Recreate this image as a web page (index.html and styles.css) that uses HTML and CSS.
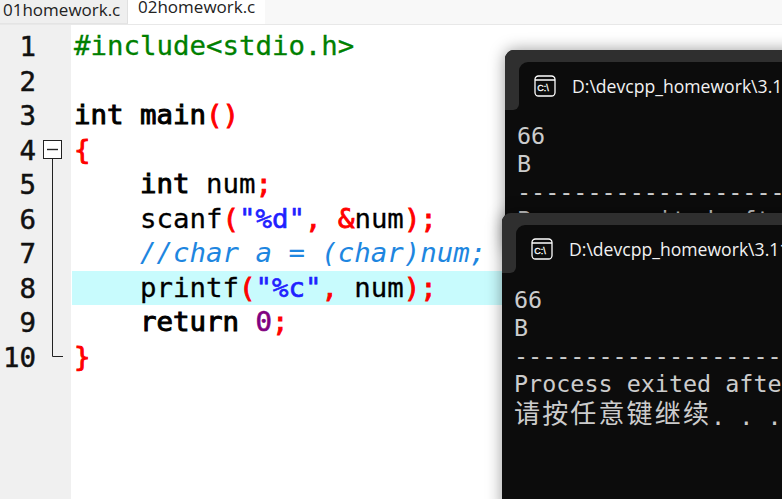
FILE: index.html
```html
<!DOCTYPE html>
<html lang="en">
<head>
<meta charset="utf-8">
<title>Dev-C++</title>
<link rel="stylesheet" href="styles.css">
</head>
<body>
<div class="app">
  <div class="tabs">
    <div class="tab inactive">01homework.c</div>
    <div class="tab active">02homework.c</div>
  </div>
  <div class="editor">
    <div class="gutter">
      <div class="num">1</div><div class="num">2</div><div class="num">3</div><div class="num">4</div><div class="num">5</div>
      <div class="num">6</div><div class="num">7</div><div class="num">8</div><div class="num">9</div><div class="num">10</div>
      <svg class="fold" width="24" height="225" viewBox="0 0 24 225">
        <rect x="0.5" y="0.5" width="18" height="18" fill="#fff" stroke="#222"/>
        <path d="M4 9.5H15" stroke="#222" stroke-width="1.4" fill="none"/>
        <path d="M9.5 19V216.5H20" stroke="#222" fill="none"/>
      </svg>
    </div>
    <div class="code">
      <div class="line"><span class="pre">#include&lt;stdio.h&gt;</span></div>
      <div class="line"></div>
      <div class="line"><span class="kw">int</span> <span class="kw">main</span><span class="sym">()</span></div>
      <div class="line"><span class="sym">{</span></div>
      <div class="line">    <span class="kw">int</span> num<span class="sym">;</span></div>
      <div class="line">    scanf<span class="sym">(</span><span class="str">"%d"</span><span class="sym">,</span> <span class="sym">&amp;</span>num<span class="sym">);</span></div>
      <div class="line comment">    //char a = (char)num;</div>
      <div class="line current">    printf<span class="sym">(</span><span class="str">"%c"</span><span class="sym">,</span> num<span class="sym">);</span></div>
      <div class="line">    <span class="kw">return</span> <span class="lit">0</span><span class="sym">;</span></div>
      <div class="line"><span class="sym">}</span></div>
    </div>
  </div>
</div>

<section class="term back">
  <header class="term-bar">
    <div class="term-tab">
      <svg class="cmd" width="22" height="22" viewBox="0 0 22 22"><rect x="1" y="1" width="20" height="20" rx="3.5" fill="none" stroke="#fff" stroke-width="1.3"/><path d="M1 5H21" stroke="#fff" stroke-width="1.3"/><text x="3.2" y="15.5" class="cmd-text">C:\</text></svg>
      <span class="term-title">D:\devcpp_homework\3.11\02homework.exe</span>
    </div>
  </header>
  <pre class="term-body">66
B
--------------------------------
Process exited after 2.103 seconds</pre>
</section>

<section class="term front">
  <header class="term-bar">
    <div class="term-tab">
      <svg class="cmd" width="22" height="22" viewBox="0 0 22 22"><rect x="1" y="1" width="20" height="20" rx="3.5" fill="none" stroke="#fff" stroke-width="1.3"/><path d="M1 5H21" stroke="#fff" stroke-width="1.3"/><text x="3.2" y="15.5" class="cmd-text">C:\</text></svg>
      <span class="term-title">D:\devcpp_homework\3.11\02homework.exe</span>
    </div>
  </header>
  <pre class="term-body">66
B
--------------------------------
Process exited after 2.103 seconds
<span class="cjk">请按任意键继续</span>. . .</pre>
</section>
</body>
</html>
```
FILE: styles.css
```css
html, body {
  margin: 0;
  padding: 0;
  height: 100%;
  overflow: hidden;
  background: #fff;
}
.app {
  display: flex;
  flex-direction: column;
  width: 782px;
  height: 499px;
}
.tabs {
  display: flex;
  height: 24px;
  background: #f8f8f8;
  border-bottom: 1px solid #e8e8e8;
  font: 17px "Open Sans", "Noto Sans", sans-serif;
  color: #222;
}
.tab {
  box-sizing: border-box;
  height: 24px;
  white-space: nowrap;
}
.inactive {
  width: 128px;
  padding: 0 0 0 3px;
  line-height: 20px;
  background: #efefef;
  border-right: 1px solid #e0e0e0;
  border-bottom: 1px solid #e4e4e4;
}
.active {
  width: 137px;
  padding-left: 10px;
  line-height: 13px;
  background: #fff;
}
.editor {
  display: flex;
  flex: 1;
  padding-top: 4px;
  background: #fff;
  font: 27.4px/34.5px "DejaVu Sans Mono", monospace;
  color: #000;
  -webkit-text-stroke: 0.3px currentColor;
}
.gutter {
  position: relative;
  width: 71px;
  margin-top: -4px;
  padding-top: 5px;
  background: #f0f0f0;
  flex: none;
  -webkit-text-stroke: 0.5px currentColor;
}
.num {
  box-sizing: border-box;
  width: 36px;
  height: 34.5px;
  text-align: right;
  color: #111;
}
.fold {
  position: absolute;
  left: 43px;
  top: 115px;
}
.code {
  flex: 1;
  padding-left: 1px;
}
.line {
  height: 34.5px;
  padding-left: 2px;
  white-space: pre;
}
.kw { -webkit-text-stroke: 1px currentColor; }
.pre { color: #008000; }
.sym { color: #ff0000; -webkit-text-stroke: 0.9px currentColor; }
.str { color: #2020ff; -webkit-text-stroke: 0.6px currentColor; }
.lit { color: #800080; -webkit-text-stroke: 0.6px currentColor; }
.comment { color: #1e86e0; font-style: italic; -webkit-text-stroke: 0; }
.current { background: #c8fbfd; }

.term {
  position: absolute;
  width: 420px;
  background: #0c0c0c;
  border-radius: 9px 0 0 0;
  box-shadow: 0 0 16px rgba(0, 0, 0, 0.4);
  overflow: hidden;
}
.back { left: 505px; top: 50px; height: 200px; }
.front { left: 502px; top: 213px; height: 300px; }
.front .term-body { padding-top: 1px; }
.term-bar {
  display: flex;
  box-sizing: border-box;
  height: 60px;
  padding-top: 12px;
  background: linear-gradient(#2f2f2f 50%, #0c0c0c 50%);
  margin-bottom: 12px;
}
.term-bar::before {
  content: "";
  flex: none;
  width: 14px;
  background: #2f2f2f;
  border-radius: 0 0 6px 0;
}
.term-tab {
  flex: 1;
  display: flex;
  align-items: center;
  gap: 16px;
  height: 48px;
  padding: 0 0 1px 15px;
  box-sizing: border-box;
  background: #0c0c0c;
  border-radius: 9px 0 0 0;
}
.term-title {
  font: 17.6px "Open Sans", "Noto Sans", sans-serif;
  color: #f2f2f2;
  white-space: nowrap;
}
.cmd { flex: none; }
.cmd-text {
  font: 400 9px "Liberation Sans", sans-serif;
  stroke: #fff;
  stroke-width: 0.3px;
  fill: #fff;
}
.term-body {
  margin: 0;
  padding: 0 0 0 12px;
  font: 23.4px/28px "DejaVu Sans Mono", monospace;
  color: #cccccc;
  white-space: pre;
}
.cjk {
  font-family: "Noto Sans CJK SC", sans-serif;
  font-size: 26px;
  letter-spacing: 2.15px;
  line-height: 28px;
  vertical-align: 2px;
}
```
